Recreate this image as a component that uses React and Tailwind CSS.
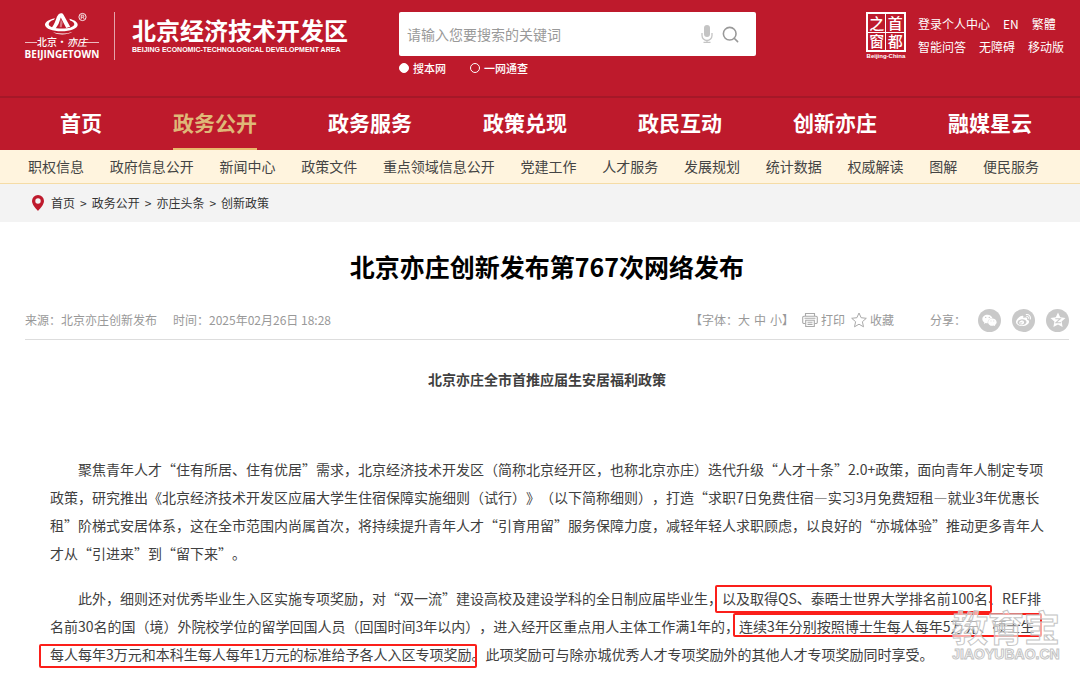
import { useState } from 'react'
import { Search } from 'lucide-react'
import { FaWeixin, FaWeibo } from 'react-icons/fa'

const NAV = ['首页', '政务公开', '政务服务', '政策兑现', '政民互动', '创新亦庄', '融媒星云']

const SUB_NAV = [
  '职权信息', '政府信息公开', '新闻中心', '政策文件', '重点领域信息公开', '党建工作',
  '人才服务', '发展规划', '统计数据', '权威解读', '图解', '便民服务'
]

const CRUMBS = ['首页', '政务公开', '亦庄头条', '创新政策']

function Emblem() {
  return (
    <svg viewBox="0 0 66 24" className="h-6 w-[66px]" fill="#fff" aria-hidden="true">
      <path fillRule="evenodd" d="M26 6.2C19.500 7.500 15.700 10 16 13c.5 3.800 7.600 6.300 16.300 6.300 9 0 16.200-2.600 16.400-6.300.1-2.800-3-5-8.400-6.300l.8 1.700c3 1 4.300 2.300 4.200 3.800-.3 2.700-5.600 4.400-12.500 4.400-7.200 0-13-1.500-13.100-4.300-.1-2 2-3.600 5.300-4.600z" />
      <path d="M29.600 2.200c1.800-1.400 3.900-1.300 4.900.5l6.700 12-4 1.300-5.400-10.600-2.300 6.600-3.200 5-3.600-1.200c2.800-3.500 4-7.500 5.200-11z" />
      <path d="M31.800 7l1.800 3.700-.9 4.600-2.100-.1z" opacity=".4" />
      <path d="M24 20.300c7 1.900 14 1.600 19.500-.6-5 3.300-13.500 3.800-19.500.6z" />
      <circle cx="53.500" cy="5" r="3.600" fill="none" stroke="#fff" strokeWidth=".9" />
      <path d="M52.200 7V3.200h1.700a1 1 0 010 2h-1.700M54 5.200L55.200 7" fill="none" stroke="#fff" strokeWidth=".8" />
    </svg>
  )
}

function Logo() {
  return (
    <a href="#" className="flex items-center text-white">
      <span className="flex w-[74px] flex-col items-center">
        <Emblem />
        <span className="flex w-full items-center justify-between">
          <span className="h-px w-3 bg-white/70" />
          <span className="text-[10px] leading-3 font-medium whitespace-nowrap">北京·<i>亦庄</i></span>
          <span className="h-px w-3 bg-white/70" />
        </span>
        <span className="font-['Open_Sans',sans-serif] text-[10px] leading-3 font-bold">BEIJINGETOWN</span>
      </span>
      <span className="mr-[17px] ml-[15px] h-12 w-px bg-white/60" />
      <span className="flex flex-col">
        <span className="text-[24px] leading-7 font-bold whitespace-nowrap">北京经济技术开发区</span>
        <span className="font-['Liberation_Sans',sans-serif] text-[7px] leading-3 font-bold whitespace-nowrap">
          BEIJING ECONOMIC-TECHNOLOGICAL DEVELOPMENT AREA
        </span>
      </span>
    </a>
  )
}

function SearchBox() {
  const [scope, setScope] = useState('site')
  const radio = 'size-[10px] appearance-none rounded-full border border-white checked:bg-white'

  return (
    <form className="w-[357px] text-white" onSubmit={e => e.preventDefault()}>
      <div className="flex h-11 items-center gap-2 rounded-xs bg-white pr-4 pl-2">
        <input type="text" aria-label="搜索" placeholder="请输入您要搜索的关键词"
          className="min-w-0 flex-1 text-sm text-gray-700 outline-none placeholder:text-[#999]" />
        <button type="button" aria-label="语音输入">
          <svg viewBox="0 0 12 18" className="h-[18px] w-3" fill="#c4c4c4">
            <rect x="3" y="0" width="6" height="12" rx="3" />
            <path d="M1 8v2.500a5 5 0 0010 0V8M6 15v2M2.500 17.300h7" fill="none" stroke="#c4c4c4" strokeWidth="1.300" />
          </svg>
        </button>
        <button type="submit" aria-label="查询">
          <Search size={19} strokeWidth={2} color="#999" />
        </button>
      </div>
      <div className="mt-1 flex gap-6 text-[11px] leading-4 font-medium">
        <label className="flex items-center gap-1">
          <input type="radio" name="scope" checked={scope === 'site'} onChange={() => setScope('site')} className={radio} />
          搜本网
        </label>
        <label className="flex items-center gap-1">
          <input type="radio" name="scope" checked={scope === 'all'} onChange={() => setScope('all')} className={radio} />
          一网通查
        </label>
      </div>
    </form>
  )
}

function CapitalWindow() {
  return (
    <a href="#" className="flex w-10 flex-col items-center text-white">
      <span className="grid size-10 grid-cols-2 grid-rows-2 gap-px border-2 border-white bg-white">
        {['之', '首', '窗', '都'].map(c => (
          <span key={c} className="flex items-center justify-center bg-[#be1a2c] text-[15px] leading-4 font-medium">{c}</span>
        ))}
      </span>
      <span className="font-['Liberation_Sans',sans-serif] text-[6px] leading-2 font-bold whitespace-nowrap">Beijing-China</span>
    </a>
  )
}

function Header() {
  return (
    <header className="flex h-[96px] items-start bg-[#be1a2c] pt-3 pr-4 pl-[25px]">
      <Logo />
      <div className="ml-[51px]"><SearchBox /></div>
      <div className="ml-auto flex gap-3">
        <CapitalWindow />
        <div className="flex flex-col text-xs leading-[23px] whitespace-nowrap text-white">
          <div className="flex gap-[13px]">
            <a href="#">登录个人中心</a><a href="#">EN</a><a href="#">繁體</a>
          </div>
          <div className="flex gap-[13px]">
            <a href="#">智能问答</a><a href="#">无障碍</a><a href="#">移动版</a>
          </div>
        </div>
      </div>
    </header>
  )
}

function Menus() {
  return (
    <>
      <nav className="flex h-[54px] justify-between border-t-2 border-[#a51828] bg-[#be1a2c] pr-12 pl-[60px] text-[21px] font-bold text-white">
        {NAV.map((n, i) => (
          <a key={n} href="#"
            className={i === 1 ? 'flex items-center border-b-2 border-[#e8b96c] text-[#dfb878]' : 'flex items-center border-b-2 border-transparent'}>
            {n}
          </a>
        ))}
      </nav>
      <nav className="flex h-[34px] items-center justify-between border-b border-[#f5dca6] bg-[#fff4de] pr-[41px] pb-[2px] pl-7 text-sm text-[#444]">
        {SUB_NAV.map(n => <a key={n} href="#">{n}</a>)}
      </nav>
    </>
  )
}

function Breadcrumb() {
  return (
    <nav aria-label="当前位置" className="flex h-[38px] items-center bg-[#f3f3f3] pl-8 text-xs text-[#333]">
      <svg viewBox="0 0 12 16" className="mr-[7px] h-4 w-3" aria-hidden="true">
        <path fillRule="evenodd" fill="#be1a2c" d="M6 0a6 6 0 00-6 6c0 3.500 3.500 7 6 10 2.500-3 6-6.500 6-10a6 6 0 00-6-6zm0 3.300a2.700 2.700 0 110 5.400 2.700 2.700 0 010-5.400z" />
      </svg>
      <ol className="flex gap-[5px]">
        {CRUMBS.map((c, i) => (
          <li key={c} className="flex gap-[5px]">
            {i > 0 && <span>&gt;</span>}
            <a href="#">{c}</a>
          </li>
        ))}
      </ol>
    </nav>
  )
}

function PrinterIcon() {
  return (
    <svg viewBox="0 0 16 16" className="size-4" fill="none" stroke="#aaa" strokeWidth="1.100" aria-hidden="true">
      <path d="M3.500 4V1.500h9V4M3.500 11.500H2a1.300 1.300 0 01-1.300-1.300V5.500A1.300 1.300 0 012 4.200h12a1.300 1.300 0 011.300 1.300v4.700a1.300 1.300 0 01-1.300 1.300h-1.500" />
      <path d="M3.700 8.200h8.600v6.300H3.700zM2.500 6.200h11M5.500 10.300h5M5.500 12.400h5" />
    </svg>
  )
}

function StarIcon() {
  return (
    <svg viewBox="0 0 16 16" className="size-4" fill="none" stroke="#aaa" strokeWidth="1" strokeLinejoin="round" aria-hidden="true">
      <path d="M8 1l2.100 4.700 5.200.6-3.900 3.400 1.100 5.100L8 12.200l-4.500 2.600 1.100-5.100L.7 6.300l5.200-.6z" />
    </svg>
  )
}

function QzoneIcon() {
  return (
    <svg viewBox="0 0 16 16" className="size-4" aria-hidden="true">
      <path fill="#fff" d="M8 .6l2.200 4.700 5.300.7-3.900 3.600 1 5.300L8 12.400l-4.600 2.500 1-5.300L.5 6l5.300-.7z" />
      <path d="M5.300 6.700h5L6 10.700h5" fill="none" stroke="#c9c9c9" strokeWidth="1.100" />
    </svg>
  )
}

function MetaBar() {
  const share = 'flex size-[23px] items-center justify-center rounded-full bg-[#c9c9c9] text-white'

  return (
    <div className="flex h-[39px] items-center border-b border-[#ddd] text-xs whitespace-nowrap text-[#999]">
      <span>来源：北京亦庄创新发布</span>
      <span className="ml-4">时间：2025年02月26日 18:28</span>
      <div className="ml-auto flex items-center">
        <span>【字体：</span>
        <div className="flex gap-1">
          <button type="button">大</button>
          <button type="button">中</button>
          <button type="button">小</button>
        </div>
        <span>】</span>
        <button type="button" className="ml-2 flex items-center gap-[3px]"><PrinterIcon />打印</button>
        <button type="button" className="ml-[6px] flex items-center gap-[3px]"><StarIcon />收藏</button>
        <span className="ml-9">分享：</span>
        <div className="ml-3 flex gap-[11px]">
          <a href="#" aria-label="微信" className={share}><FaWeixin size={15} /></a>
          <a href="#" aria-label="微博" className={share}><FaWeibo size={15} /></a>
          <a href="#" aria-label="QQ空间" className={share}><QzoneIcon /></a>
        </div>
      </div>
    </div>
  )
}

function Watermark() {
  return (
    <div className="pointer-events-none absolute top-[151px] right-[20px] flex flex-col items-center font-bold text-white/60 select-none">
      <span className="text-[36px] leading-10 [-webkit-text-stroke:1px_#c4c4c4]">教育宝</span>
      <span className="font-['Liberation_Sans',sans-serif] text-[14px] leading-4 [-webkit-text-stroke:1px_#c4c4c4]">JIAOYUBAO.CN</span>
    </div>
  )
}

function Article() {
  const mark = 'pointer-events-none absolute rounded-xs border-2 border-[#fb1f1a]'

  return (
    <main>
      <div className="pr-[11px] pl-[25px]">
        <h1 className="pt-6 text-center text-[25px] leading-10 font-bold text-black">北京亦庄创新发布第767次网络发布</h1>
        <div className="mt-[15px]"><MetaBar /></div>
        <h2 className="mt-[25px] text-center text-sm leading-7 font-bold text-[#404040]">北京亦庄全市首推应届生安居福利政策</h2>
      </div>
      <div className="relative mt-[62px] pr-[34px] pl-[50px] text-sm leading-7 text-[#404040] [text-spacing-trim:space-all]">
        <p className="indent-7">
          聚焦青年人才“住有所居、住有优居”需求，北京经济技术开发区（简称北京经开区，也称北京亦庄）迭代升级“人才十条”2.0+政策，面向青年人制定专项政策，研究推出《北京经济技术开发区应届大学生住宿保障实施细则（试行）》（以下简称细则），打造“求职7日免费住宿—实习3月免费短租—就业3年优惠长租”阶梯式安居体系，这在全市范围内尚属首次，将持续提升青年人才“引育用留”服务保障力度，减轻年轻人求职顾虑，以良好的“亦城体验”推动更多青年人才从“引进来”到“留下来”。
        </p>
        <div className="relative mt-[17px]">
          <p className="indent-7">
            此外，细则还对优秀毕业生入区实施专项奖励，对“双一流”建设高校及建设学科的全日制应届毕业生，以及取得QS、泰晤士世界大学排名前100名、REF排名前30名的国（境）外院校学位的留学回国人员（回国时间3年以内），进入经开区重点用人主体工作满1年的，连续3年分别按照博士生每人每年5万元、硕士生每人每年3万元和本科生每人每年1万元的标准给予各人入区专项奖励。此项奖励可与除亦城优秀人才专项奖励外的其他人才专项奖励同时享受。
          </p>
          <span className={`${mark} top-px left-[665px] h-7 w-[277px]`} />
          <span className={`${mark} top-[29px] left-[683px] h-6 w-[309px]`} />
          <span className={`${mark} top-[60px] -left-[11px] h-6 w-[438px]`} />
        </div>
        <Watermark />
      </div>
    </main>
  )
}

export default function App() {
  return (
    <div lang="zh-CN" className="min-h-screen bg-white font-['Noto_Sans_CJK_SC',sans-serif]">
      <Header />
      <Menus />
      <Breadcrumb />
      <Article />
    </div>
  )
}
